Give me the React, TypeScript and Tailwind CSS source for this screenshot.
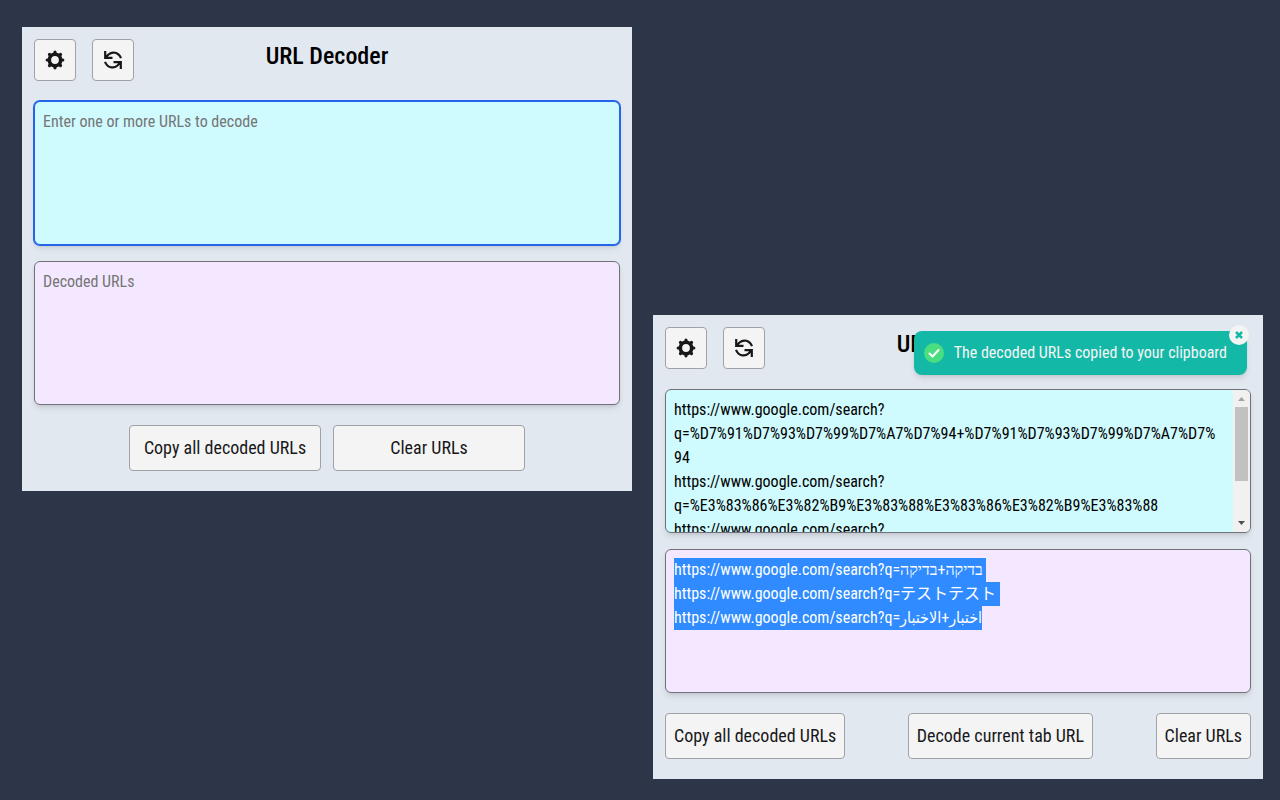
import { useEffect, useRef } from "react";
import type { ReactNode } from "react";

const ENCODED_URLS = `https://www.google.com/search?q=%D7%91%D7%93%D7%99%D7%A7%D7%94+%D7%91%D7%93%D7%99%D7%A7%D7%94
https://www.google.com/search?q=%E3%83%86%E3%82%B9%E3%83%88%E3%83%86%E3%82%B9%E3%83%88
https://www.google.com/search?q=%D8%A7%D8%AE%D8%AA%D8%A8%D8%A7%D8%B1+%D8%A7%D9%84%D8%A7%D8%AE%D8%AA%D8%A8%D8%A7%D8%B1`;

const DECODED_URLS = `https://www.google.com/search?q=בדיקה+בדיקה
https://www.google.com/search?q=テストテスト
https://www.google.com/search?q=اختبار+الاختبار`;

function GearIcon() {
  return (
    <svg viewBox="0 0 20 20" className="h-5 w-5" fill="none" stroke="currentColor" aria-hidden="true">
      <circle cx="10" cy="10" r="5.7" strokeWidth="3.6" />
      <path
        d="M10 2.200V4M10 16v1.800M2.200 10H4M16 10h1.800M4.500 4.500l1.300 1.300M14.200 14.200l1.300 1.300M15.500 4.500l-1.300 1.300M5.800 14.200l-1.300 1.300"
        strokeWidth="3.200"
        strokeLinecap="round"
      />
    </svg>
  );
}

function RefreshIcon() {
  return (
    <svg viewBox="0 0 20 20" className="h-5 w-5" fill="none" stroke="currentColor" strokeWidth="2.2" aria-hidden="true">
      <path d="M2.200 1v6.800H9.500M2.500 7.500L5.500 4.500C9.500 1 15.500 2.200 18 8.200" />
      <path d="M17.800 19v-6.800H10.500M17.500 12.500L14.500 15.500C10.500 19 4.500 17.800 2 11.800" />
      <path d="M2.500 4.500v3H6zM17.500 15.500v-3H14z" fill="currentColor" stroke="none" />
    </svg>
  );
}

function IconButton({ label, children }: { label: string; children: ReactNode }) {
  return (
    <button
      aria-label={label}
      className="flex h-[42px] w-[42px] items-center justify-center rounded border border-[#a1a1aa] bg-[#f4f4f4] text-[#18181b] hover:bg-white"
    >
      {children}
    </button>
  );
}

function ActionButton({ className = "", children }: { className?: string; children: ReactNode }) {
  return (
    <button
      className={`h-[46px] whitespace-nowrap rounded border border-[#a1a1aa] bg-[#f4f4f4] px-2 text-lg text-[#18181b] hover:bg-white ${className}`}
    >
      {children}
    </button>
  );
}

function Panel({ className = "", children }: { className?: string; children: ReactNode }) {
  return (
    <section className={`relative min-w-0 flex-1 bg-[#e2e8f0] px-3 pt-3 pb-5 ${className}`}>
      <header className="mb-5 grid grid-cols-[1fr_auto_1fr] items-start">
        <div className="flex gap-4">
          <IconButton label="Settings">
            <GearIcon />
          </IconButton>
          <IconButton label="Reload">
            <RefreshIcon />
          </IconButton>
        </div>
        <h1 className="text-2xl leading-[34px] font-medium text-black">URL Decoder</h1>
      </header>
      {children}
    </section>
  );
}

function ScrollBar() {
  return (
    <div className="flex w-[17px] shrink-0 flex-col items-center bg-[#f1f1f1]" aria-hidden="true">
      <svg viewBox="0 0 17 17" className="h-[17px] w-[17px]" fill="#a3a3a3">
        <path d="M5 11h7L8.500 7z" />
      </svg>
      <div className="h-[74px] w-[13px] bg-[#c1c1c1]" />
      <svg viewBox="0 0 17 17" className="mt-auto h-[17px] w-[17px]" fill="#505050">
        <path d="M5 6h7L8.500 10z" />
      </svg>
    </div>
  );
}

function Toast() {
  return (
    <div
      role="status"
      className="absolute right-4 top-4 flex h-11 items-center gap-[10px] rounded-lg bg-[#14b8a6] pl-[10px] pr-5 text-base text-[#f4f4f5] shadow-md"
    >
      <span className="flex h-5 w-5 items-center justify-center rounded-full bg-[#4ade80]">
        <svg viewBox="0 0 20 20" className="h-5 w-5" fill="none" stroke="white" strokeWidth="2" strokeLinecap="round" strokeLinejoin="round">
          <path d="M5.500 10.500l3 3 6-6.500" />
        </svg>
      </span>
      The decoded URLs copied to your clipboard
      <button
        aria-label="Close"
        className="absolute -right-0.5 -top-1.5 flex h-5 w-5 items-center justify-center rounded-full bg-[#f4f4f5] text-[#14b8a6]"
      >
        <svg viewBox="0 0 8 8" className="h-2 w-2" fill="none" stroke="currentColor" strokeWidth="2.500">
          <path d="M1 1l6 6M7 1L1 7" />
        </svg>
      </button>
    </div>
  );
}

export default function App() {
  const decodedRef = useRef<HTMLTextAreaElement>(null);

  useEffect(() => {
    decodedRef.current?.focus();
    decodedRef.current?.select();
  }, []);

  return (
    <main className="flex min-h-screen items-start gap-[21px] bg-[#2c3648] pt-[27px] pr-[17px] pb-[21px] pl-[22px] font-['Roboto_Condensed','Liberation_Sans_Narrow','Noto_Sans_CJK_JP',sans-serif]">
      <Panel>
        <textarea
          aria-label="URLs to decode"
          placeholder="Enter one or more URLs to decode"
          className="block h-36 w-full resize-none rounded-md border border-[#2563eb] bg-[#cffafe] p-2 text-base text-black shadow-md outline-none ring-1 ring-[#2563eb] placeholder:text-[#757575]"
        />
        <textarea
          aria-label="Decoded URLs"
          placeholder="Decoded URLs"
          readOnly
          className="mt-4 block h-36 w-full resize-none rounded-md border border-[#71717a] bg-[#f3e8ff] p-2 text-base text-black shadow-md outline-none placeholder:text-[#757575]"
        />
        <div className="mt-5 flex justify-center gap-3">
          <ActionButton className="w-48">Copy all decoded URLs</ActionButton>
          <ActionButton className="w-48">Clear URLs</ActionButton>
        </div>
      </Panel>

      <Panel className="self-end">
        <div className="flex h-36 overflow-hidden rounded-md border border-[#71717a] bg-[#cffafe] shadow-md">
          <textarea
            aria-label="URLs to decode"
            defaultValue={ENCODED_URLS}
            className="block h-full min-w-0 flex-1 resize-none overflow-hidden py-2 pr-4 pl-2 text-base text-black outline-none"
          />
          <ScrollBar />
        </div>
        <textarea
          ref={decodedRef}
          aria-label="Decoded URLs"
          defaultValue={DECODED_URLS}
          readOnly
          className="mt-4 block h-36 w-full resize-none rounded-md border border-[#71717a] bg-[#f3e8ff] p-2 font-['Roboto_Condensed','Liberation_Serif','DejaVu_Sans_Condensed','Noto_Sans_CJK_JP',sans-serif] text-base text-black shadow-md outline-none selection:bg-[#2f8bff] selection:text-white"
        />
        <div className="mt-5 flex justify-between">
          <ActionButton>Copy all decoded URLs</ActionButton>
          <ActionButton>Decode current tab URL</ActionButton>
          <ActionButton>Clear URLs</ActionButton>
        </div>
        <Toast />
      </Panel>
    </main>
  );
}
